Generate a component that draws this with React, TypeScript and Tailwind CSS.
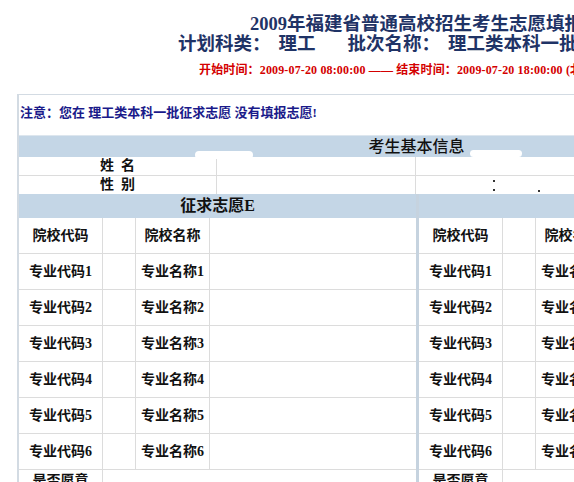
const serif = "font-['Liberation_Serif','Noto_Sans_CJK_SC',serif]";

function ChoiceTable({ title }: { title: string }) {
  const rows = ['1', '2', '3', '4', '5', '6'];
  return (
    <div className="w-[397px] shrink-0">
      <div className={`h-[24px] bg-[#c4d6e6] text-center text-[16px] font-bold leading-[24px] text-[#111] ${serif}`}>
        {title}
      </div>
      <div className="grid h-[36px] grid-cols-[84px_33px_74px_1fr] border-b border-[#dcdcdc]">
        <div className="flex items-center justify-center border-r border-[#dcdcdc] font-bold">院校代码</div>
        <div className="border-r border-[#dcdcdc]" />
        <div className="flex items-center justify-center border-r border-[#dcdcdc] font-bold">院校名称</div>
        <div />
      </div>
      {rows.map((n) => (
        <div key={n} className="grid h-[36px] grid-cols-[84px_33px_74px_1fr] border-b border-[#dcdcdc]">
          <div className="flex items-center justify-center border-r border-[#dcdcdc] font-bold">专业代码{n}</div>
          <div className="border-r border-[#dcdcdc]" />
          <div className="flex items-center justify-center border-r border-[#dcdcdc] font-bold">专业名称{n}</div>
          <div />
        </div>
      ))}
      <div className="grid h-[36px] grid-cols-[84px_1fr]">
        <div className="border-r border-[#dcdcdc] pt-[2px] text-center font-bold leading-[18px]">是否愿意</div>
        <div />
      </div>
    </div>
  );
}

export default function App() {
  return (
    <div className={`relative h-[482px] w-[574px] overflow-hidden bg-white ${serif}`}>
      <div className="w-[830px]">
        <div className="whitespace-nowrap pt-[13px] text-[18.5px] font-bold text-[#1f3366]">
          <div className="pl-[250px] leading-[22px]">2009年福建省普通高校招生考生志愿填报系统</div>
          <div className="flex pl-[178px] leading-[18px]">
            <span>计划科类：</span>
            <span className="ml-[8px]">理工</span>
            <span className="ml-[32px]">批次名称：</span>
            <span className="ml-[8px]">理工类本科一批征求志愿</span>
          </div>
        </div>
        <div className="mt-[9px] whitespace-nowrap pl-[199px] text-[12px] font-bold leading-[16px] tracking-[0.15px] text-[#d40000]">
          开始时间：2009-07-20 08:00:00 —— 结束时间：2009-07-20 18:00:00 (北京时间)
        </div>

        <div className="ml-[17px] mt-[16px] w-[797px] border-l-2 border-t border-[#d3dbe3] text-[14px] text-[#111]">
          <div className="whitespace-nowrap pl-[1px] pt-[10px] text-[13px] font-bold leading-[16px] text-[#1a1a8a]">
            注意：您在&nbsp;理工类本科一批征求志愿&nbsp;没有填报志愿!
          </div>

          <div className="mt-[14px] h-[22px] border-t border-[#dde6ee] bg-[#c4d6e6] text-center text-[16px] font-medium leading-[21px]">
            考生基本信息
          </div>
          <div className="grid h-[19px] grid-cols-[198px_199px_1fr] border-b border-[#dcdcdc] font-bold leading-[18px]">
            <div className="border-r border-[#dcdcdc] text-center">姓&nbsp;&nbsp;名</div>
            <div className="border-r border-[#dcdcdc]" />
            <div />
          </div>
          <div className="grid h-[18px] grid-cols-[198px_199px_1fr] font-bold leading-[18px]">
            <div className="border-r border-[#dcdcdc] text-center">性&nbsp;&nbsp;别</div>
            <div className="border-r border-[#dcdcdc]" />
            <div />
          </div>

          <div className="flex">
            <ChoiceTable title="征求志愿E" />
            <div className="w-[3px] shrink-0 bg-[#c6d3df]" />
            <ChoiceTable title="征求志愿F" />
          </div>
        </div>
      </div>

      <div className="absolute left-[195px] top-[151px] h-[8px] w-[58px] rounded-full bg-white" />
      <div className="absolute left-[470px] top-[150px] h-[7px] w-[52px] rounded-full bg-white" />
      <div className="absolute left-[493px] top-[180px] h-[2px] w-[2px] bg-[#333]" />
      <div className="absolute left-[493px] top-[189px] h-[2px] w-[2px] bg-[#333]" />
      <div className="absolute left-[538px] top-[190px] h-[2px] w-[2px] bg-[#333]" />
    </div>
  );
}
